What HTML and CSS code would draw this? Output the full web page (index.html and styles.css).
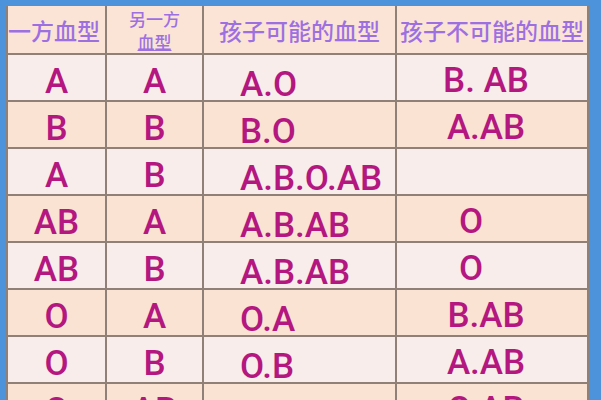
FILE: index.html
```html
<!DOCTYPE html>
<html lang="zh">
<head>
<meta charset="utf-8">
<link rel="stylesheet" href="styles.css">
</head>
<body>
<div class="frame">
  <table class="blood">
    <colgroup>
      <col class="c1"><col class="c2"><col class="c3"><col class="c4">
    </colgroup>
    <thead>
      <tr>
        <th class="h1">一方血型</th>
        <th class="h2"><span>另一方</span><span class="ul">血型</span></th>
        <th>孩子可能的血型</th>
        <th>孩子不可能的血型</th>
      </tr>
    </thead>
    <tbody>
      <tr class="light"><td>A</td><td>A</td><td class="may">A.O</td><td class="not">B. AB</td></tr>
      <tr class="peach"><td>B</td><td>B</td><td class="may">B.O</td><td class="not">A.AB</td></tr>
      <tr class="light"><td>A</td><td>B</td><td class="may">A.B.O.AB</td><td class="not"></td></tr>
      <tr class="peach"><td>AB</td><td>A</td><td class="may">A.B.AB</td><td class="not o">O</td></tr>
      <tr class="light"><td>AB</td><td>B</td><td class="may">A.B.AB</td><td class="not o">O</td></tr>
      <tr class="peach"><td>O</td><td>A</td><td class="may">O.A</td><td class="not">B.AB</td></tr>
      <tr class="light"><td>O</td><td>B</td><td class="may">O.B</td><td class="not">A.AB</td></tr>
      <tr class="peach"><td>O</td><td>AB</td><td class="may">A.B</td><td class="not">O.AB</td></tr>
    </tbody>
  </table>
</div>
</body>
</html>
```
FILE: styles.css
```css
html, body {
  margin: 0;
  padding: 0;
  background: #4d93dc;
  overflow: hidden;
  width: 601px;
  height: 400px;
}

.frame {
  padding: 6px 12px 0 6px;
  height: 400px;
  box-sizing: border-box;
  overflow: hidden;
}

.blood {
  border-collapse: collapse;
  table-layout: fixed;
  width: 583px;
  background: #fbe6da;
  border-left: 2px solid #f3e6e4;
}

.c1 { width: 99px; }
.c2 { width: 97px; }
.c3 { width: 193px; }
.c4 { width: 192px; }

.blood th,
.blood td {
  border: 2px solid #8f8178;
  padding: 0;
  text-align: center;
  vertical-align: middle;
  box-sizing: border-box;
}

.blood thead tr {
  height: 48px;
  background: #fbe4d6;
}

.blood th {
  height: 48px;
  font-family: "Noto Sans CJK SC", "Noto Sans", sans-serif;
  font-weight: 500;
  font-size: 23px;
  color: #9d70e2;
  white-space: nowrap;
  line-height: 26px;
  border-top: 0;
}

.blood th.h1 {
  padding-right: 8px;
}

.blood th.h2 {
  font-size: 17px;
  line-height: 23px;
}

.blood th.h2 span {
  display: block;
}

.blood th .ul {
  text-decoration: underline;
  text-decoration-thickness: 1px;
  text-underline-offset: 1px;
}

.blood tbody tr {
  height: 47px;
}

.blood tr.light { background: #f9edeb; }
.blood tr.peach { background: #fbe3d4; }

.blood td {
  height: 47px;
  font-family: Roboto, "Liberation Sans", sans-serif;
  font-weight: 500;
  font-size: 35px;
  color: #b4177f;
  line-height: 30px;
  padding-top: 8px;
}

.blood td.may {
  text-align: left;
  padding-left: 36px;
  padding-top: 14px;
}

.blood td.not {
  padding-right: 12px;
  padding-top: 6px;
}

.blood td.not.o {
  padding-right: 42px;
}
```
